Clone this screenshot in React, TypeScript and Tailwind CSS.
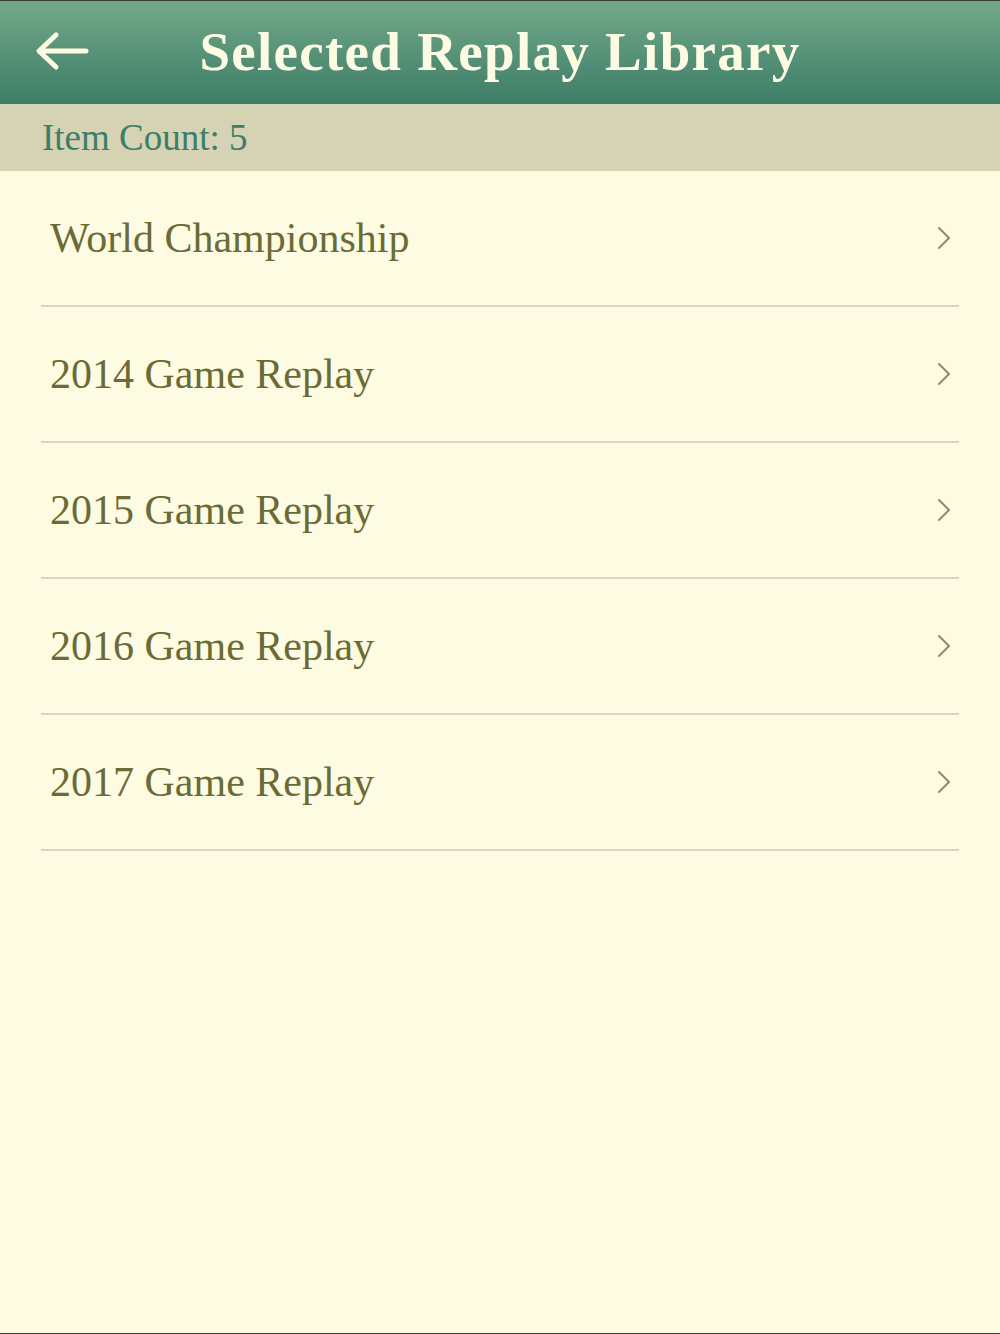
import React from "react";

const items = [
  "World Championship",
  "2014 Game Replay",
  "2015 Game Replay",
  "2016 Game Replay",
  "2017 Game Replay",
];

export default function App() {
  return (
    <div
      className="w-[1000px] h-[1334px] bg-[#fefbe3] flex flex-col border-t border-b border-[#3a3a30]"
      style={{ fontFamily: '"Liberation Serif", "DejaVu Serif", serif' }}
    >
      <header className="h-[103px] shrink-0 bg-gradient-to-b from-[#72a98a] to-[#3d7d67] flex items-center relative">
        <button className="absolute left-[34px] top-[29px] w-[56px] h-[44px] flex items-center justify-center">
          <svg width="56" height="44" viewBox="0 0 56 44" fill="none">
            <path
              d="M52 21H6M22 5L5 21L22 37"
              stroke="#fefbe3"
              strokeWidth="5"
              strokeLinecap="round"
              strokeLinejoin="round"
            />
          </svg>
        </button>
        <h1 className="w-full text-center text-[55px] font-bold text-[#fefbe3] leading-none tracking-[1.3px] -mt-[2px]">
          Selected Replay Library
        </h1>
      </header>
      <div className="h-[67px] shrink-0 bg-[#d6d2b4] flex items-center pl-[42px]">
        <span className="text-[37px] text-[#3b7f69] leading-none">Item Count: 5</span>
      </div>
      <ul className="flex flex-col">
        {items.map((t) => (
          <li
            key={t}
            className="h-[136px] mx-[41px] border-b-2 border-[#d9d7bf] flex items-center justify-between pl-[9px] pr-[8px]"
          >
            <span className="text-[42px] text-[#6b6b35] leading-none">{t}</span>
            <svg width="14" height="24" viewBox="0 0 14 24" fill="none">
              <path
                d="M2 2L12 12L2 22"
                stroke="#8d8c72"
                strokeWidth="2"
                strokeLinecap="round"
                strokeLinejoin="round"
              />
            </svg>
          </li>
        ))}
      </ul>
    </div>
  );
}
